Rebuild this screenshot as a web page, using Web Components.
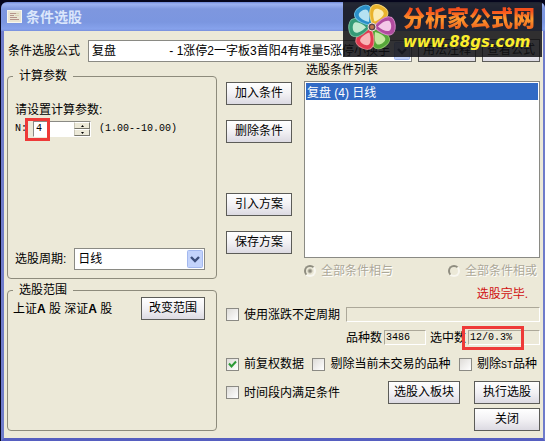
<!DOCTYPE html>
<html lang="zh-CN">
<head>
<meta charset="utf-8">
<title>条件选股</title>
<style>
html {
  background: #05051c;
}
body {
  margin: 0;
  font: 12px/14px "Liberation Sans", "Noto Sans CJK SC", sans-serif;
  color: #000;
}
</style>
</head>
<body>
<stock-picker></stock-picker>

<script>
// every element is a template string put in an open shadow root
class BaseElement extends HTMLElement {
  constructor() {
    super();
    const template = document.createElement('template');
    template.innerHTML = this.constructor.html;
    this.attachShadow({ mode: 'open' });
    this.shadowRoot.appendChild(template.content.cloneNode(true));
  }
}

class XpWindow extends BaseElement {
  static html = `
<style>
:host {
  display: flex;
  flex-direction: column;
  box-sizing: border-box;
  min-height: 100vh;
  padding: 2px 0 0 1px;
  position: relative;
}
header {
  display: flex;
  align-items: center;
  gap: 4px;
  height: 29px;
  padding-left: 6px;
  border-radius: 6px 6px 0 0;
  background: linear-gradient(#6d86d4, #9db2f0 2px, #7e97df 7px, #7b96e0 20px, #86a2ec 27px, #7a90dc);
}
svg {
  width: 15px;
  height: 13px;
}
h1 {
  margin: 0;
  font-size: 14px;
  line-height: 16px;
  color: #dbe6fb;
}
main {
  flex: 1;
  padding: 8px 3px 6px;
  background: #ece9d8;
  border: solid #6f7ccb;
  border-width: 0 2px 3px 3px;
  border-bottom-color: #565fc0;
}
</style>
<header>
  <svg viewBox="0 0 15 13">
    <rect x=".5" y=".5" width="14" height="12" fill="#e9e4d2" stroke="#f7f6ee"/>
    <path d="M3 3.5h6M3 5.5h4M3 7.5h7M3 9.5h9" stroke="#b5938a"/>
    <path d="M9 3.5h3M8 5.5h4" stroke="#d8d4b4"/>
  </svg>
  <h1><slot name="title"></slot></h1>
</header>
<main><slot></slot></main>
<slot name="overlay"></slot>
`;
}

class XpButton extends BaseElement {
  static html = `
<style>
:host {
  display: block;
}
button {
  display: block;
  width: 100%;
  height: 23px;
  padding: 0 0 2px;
  font: inherit;
  color: #000;
  white-space: nowrap;
  border: 1px solid #5c5c58;
  border-radius: 0;
  background: linear-gradient(#fff, #f2f1f4 50%, #dcdae2);
}
</style>
<button type="button"><slot></slot></button>
`;
}

class XpGroup extends BaseElement {
  static html = `
<style>
:host {
  display: block;
}
fieldset {
  box-sizing: border-box;
  height: 100%;
  min-width: 0;
  margin: 0;
  padding: 0 11px 7px 5px;
  border: 1px solid #8d8b7c;
  border-radius: 4px;
}
legend {
  margin-left: 0;
  padding: 0 6px;
}
</style>
<fieldset>
  <legend><slot name="legend"></slot></legend>
  <slot></slot>
</fieldset>
`;
}

class XpCombo extends BaseElement {
  static html = `
<style>
:host {
  display: flex;
  align-items: center;
  gap: 8px;
}
label {
  white-space: nowrap;
}
.box {
  flex: 1;
  display: grid;
  min-width: 0;
}
select, svg {
  grid-area: 1 / 1;
}
select {
  appearance: none;
  width: 100%;
  height: 22px;
  padding: 0 20px 0 3px;
  font: inherit;
  color: #000;
  background: #fff;
  border: 1px solid #8a8a84;
  border-radius: 0;
}
svg {
  justify-self: end;
  align-self: center;
  width: 16px;
  height: 18px;
  margin-right: 2px;
  pointer-events: none;
}
</style>
<label for="choice"></label>
<div class="box">
  <select id="choice"><option></option></select>
  <svg viewBox="0 0 16 18">
    <rect x=".5" y=".5" width="15" height="17" rx="1" fill="#c3d3fb" stroke="#a3b8ee"/>
    <path d="M4 7l4 4 4-4" fill="none" stroke="#3d4f7c" stroke-width="2.4"/>
  </svg>
</div>
`;
  connectedCallback() {
    this.shadowRoot.querySelector('label').textContent = this.getAttribute('label');
    this.shadowRoot.querySelector('option').textContent = this.getAttribute('value');
  }
}

class XpSpin extends BaseElement {
  static html = `
<style>
:host {
  display: flex;
  align-items: center;
  font: 10px/14px "Liberation Mono", monospace;
}
label {
  width: 18px;
}
.box {
  position: relative;
  display: flex;
  align-items: center;
  width: 58px;
  height: 16px;
  box-sizing: border-box;
  border: 1px solid #8a8a84;
  border-color: #8a8a84 #fff #fff #8a8a84;
}
input {
  appearance: textfield;
  flex: 1;
  box-sizing: border-box;
  min-width: 0;
  height: 14px;
  padding: 0 2px;
  font: inherit;
  border: 0;
  background: #fff;
}
input::-webkit-inner-spin-button {
  appearance: none;
}
.arrows {
  display: grid;
  width: 16px;
}
.arrows button {
  display: grid;
  place-items: center;
  height: 7px;
  padding: 0;
  border: 1px solid;
  border-color: #fff #77766c #77766c #c8c5b6;
  background: #ece9d8;
}
svg {
  width: 3px;
  height: 2px;
}
.range {
  margin-left: 8px;
}
</style>
<label for="value"></label>
<div class="box">
  <input id="value" type="number">
  <div class="arrows">
    <button type="button" aria-label="增加"><svg viewBox="0 0 3 2"><path d="M0 2L1.500 0 3 2z"/></svg></button>
    <button type="button" aria-label="减少"><svg viewBox="0 0 3 2"><path d="M0 0L1.500 2 3 0z"/></svg></button>
  </div>
  <slot name="mark"></slot>
</div>
<span class="range"><slot></slot></span>
`;
  connectedCallback() {
    this.shadowRoot.querySelector('label').textContent = this.getAttribute('label');
    this.shadowRoot.querySelector('input').value = this.getAttribute('value');
  }
}

class XpCheck extends BaseElement {
  static html = `
<style>
:host {
  display: block;
}
label {
  display: flex;
  align-items: center;
  gap: 5px;
  height: 14px;
  white-space: nowrap;
}
.box {
  display: grid;
}
input, svg {
  grid-area: 1 / 1;
  width: 13px;
  height: 13px;
  margin: 0;
}
input {
  appearance: none;
  border: 1px solid #8b8a84;
  box-sizing: border-box;
  background: linear-gradient(135deg, #dedcd8, #fff);
}
svg {
  display: none;
  pointer-events: none;
}
input:checked + svg {
  display: block;
}
</style>
<label>
  <span class="box">
    <input type="checkbox">
    <svg viewBox="0 0 13 13"><path d="M3 5.500l2.500 3 4.500-5" fill="none" stroke="#2c9a35" stroke-width="2"/></svg>
  </span>
  <span><slot></slot></span>
</label>
`;
  connectedCallback() {
    this.shadowRoot.querySelector('input').checked = this.hasAttribute('checked');
  }
}

class XpRadio extends BaseElement {
  static html = `
<style>
:host {
  display: block;
}
label {
  display: flex;
  align-items: center;
  gap: 5px;
  color: #aca899;
  text-shadow: 1px 1px #fff;
  white-space: nowrap;
}
input {
  appearance: none;
  box-sizing: border-box;
  width: 12px;
  height: 12px;
  margin: 0;
  border: 2px solid;
  border-color: #8f8d80 #f8f7f0 #f8f7f0 #8f8d80;
  border-radius: 50%;
}
input:checked {
  background: radial-gradient(circle, #8f8d80 1px, transparent 3px);
}
</style>
<label><input type="radio" name="logic" disabled><span><slot></slot></span></label>
`;
  connectedCallback() {
    this.shadowRoot.querySelector('input').checked = this.hasAttribute('checked');
  }
}

class XpField extends BaseElement {
  static html = `
<style>
:host {
  display: flex;
  align-items: center;
  gap: 2px;
}
label {
  white-space: nowrap;
}
label:empty {
  display: none;
}
.box {
  position: relative;
  flex: 1;
  display: flex;
}
input {
  box-sizing: border-box;
  width: 100%;
  min-width: 0;
  height: 15px;
  padding: 0 1px;
  font: 10px/13px "Liberation Mono", monospace;
  color: #000;
  background: #ece9d8;
  border: 1px solid;
  border-color: #aca899 #fff #fff #aca899;
}
</style>
<label for="value"></label>
<div class="box"><input id="value" readonly><slot name="mark"></slot></div>
`;
  connectedCallback() {
    const input = this.shadowRoot.querySelector('input');
    this.shadowRoot.querySelector('label').textContent = this.getAttribute('label') || '';
    input.value = this.getAttribute('value') || '';
    if (!this.getAttribute('label')) {
      input.setAttribute('aria-label', this.getAttribute('hint') || '');
    }
  }
}

class XpList extends BaseElement {
  static html = `
<style>
:host {
  display: flex;
  flex-direction: column;
  gap: 4px;
}
label {
  line-height: 13px;
  padding-left: 2px;
}
select {
  flex: 1;
  box-sizing: border-box;
  width: 100%;
  min-height: 177px;
  padding: 1px;
  font: inherit;
  background: #fff;
  border: 1px solid #8a8a84;
  border-radius: 0;
  outline: 0;
  overflow: hidden;
}
option {
  min-height: 16px;
  padding: 0 1px;
}
option:checked {
  color: #fff;
  background: #316ac5 linear-gradient(#316ac5, #316ac5);
}
</style>
<label for="list"><slot></slot></label>
<select id="list" size="10"><option selected></option></select>
`;
  connectedCallback() {
    this.shadowRoot.querySelector('option').textContent = this.getAttribute('value');
  }
}

// red frame laid over a value
class RedMark extends BaseElement {
  static html = `
<style>
:host {
  position: absolute;
  inset: -4px auto -5px var(--mark-left, -6px);
  width: var(--mark-width, 62px);
  box-sizing: border-box;
  border: 3px solid #ee3a38;
  pointer-events: none;
}
</style>
`;
}

class SiteBadge extends BaseElement {
  static html = `
<style>
:host {
  position: absolute;
  top: 2px;
  right: 3px;
  display: flex;
  align-items: center;
  box-sizing: border-box;
  width: 199px;
  height: 55px;
  background: rgba(16, 16, 20, .86);
}
svg {
  width: 56px;
  height: 55px;
  flex: none;
}
.text {
  display: grid;
  gap: 1px;
  padding: 0 0 2px 4px;
}
.name {
  font-size: 22px;
  font-weight: 900;
  line-height: 26px;
  color: transparent;
  background: linear-gradient(#f5501c 20%, #ff9a2e 50%, #f06a20 80%);
  background-clip: text;
  -webkit-background-clip: text;
}
a {
  font: italic bold 15px/18px "DejaVu Sans", sans-serif;
  color: #fbee2c;
  text-decoration: none;
}
</style>
<svg viewBox="0 0 56 55">
  <defs>
    <path id="petal" d="M0-2C-5-6-10-13-9-18C-8-25 8-25 9-18C10-13 5-6 0-2z"/>
    <path id="shine" d="M0-6C-3-9-6-14-5-17C-4-20 4-20 5-17C6-14 3-9 0-6z"/>
  </defs>
  <g transform="translate(29 25)">
    <g transform="rotate(148)"><use href="#petal" fill="#56a83a" stroke="#8fc76a"/><use href="#shine" fill="#c5e8a0"/></g>
    <g transform="rotate(206)"><use href="#petal" fill="#e23a50" stroke="#f08a92"/><use href="#shine" fill="#f9b5b8"/></g>
    <g transform="rotate(268)"><use href="#petal" fill="#369b77" stroke="#7cc4a2"/><use href="#shine" fill="#c3ead0"/></g>
    <g transform="rotate(-32)"><use href="#petal" fill="#2b8fc8" stroke="#6fbfdf"/><use href="#shine" fill="#b5e2f2"/></g>
    <g transform="rotate(25)"><use href="#petal" fill="#e9b32c" stroke="#f3d272"/><use href="#shine" fill="#fbecb4"/></g>
    <g transform="rotate(86)"><use href="#petal" fill="#b04b9f" stroke="#d58cc6"/><use href="#shine" fill="#f4c8e8"/></g>
    <circle r="4" fill="#5c474c" stroke="#e9ddd5"/>
    <circle r="2" fill="#c2734c"/>
  </g>
</svg>
<div class="text">
  <span class="name">分析家公式网</span>
  <a href="#">www.88gs.com</a>
</div>
`;
}

class StockPicker extends BaseElement {
  static html = `
<style>
:host {
  display: block;
}
.row {
  display: flex;
  align-items: center;
}
.formula {
  gap: 6px;
  padding-left: 1px;
}
.formula xp-combo {
  flex: 1;
}
.formula xp-button {
  width: 58px;
}
.columns {
  display: grid;
  grid-template-columns: 210px 1fr;
  gap: 9px;
  margin-top: 2px;
}
.left {
  display: grid;
  grid-template-rows: auto 1fr;
  gap: 4px;
  padding-top: 5px;
}
.params {
  display: grid;
  gap: 4px;
  padding: 20px 0 1px 2px;
}
.params xp-combo {
  margin-top: 107px;
}
.scope {
  justify-content: space-between;
}
.scope xp-button {
  width: 64px;
}
.top {
  display: grid;
  grid-template-columns: 66px 1fr;
  gap: 6px 12px;
}
.actions {
  display: flex;
  flex-direction: column;
  gap: 15px;
  padding-top: 18px;
}
.actions xp-button:nth-child(3) {
  margin-top: 35px;
}
.radios {
  grid-column: 2;
  justify-content: space-between;
  padding-right: 3px;
}
.status {
  margin: 9px 12px 6px 0;
  text-align: right;
  color: #d01010;
}
.period {
  gap: 6px;
}
.period xp-field {
  flex: 1;
}
.counts {
  display: grid;
  grid-template-columns: 80px 110px;
  justify-content: end;
  gap: 4px;
  margin-top: 8px;
}
.checks {
  justify-content: space-between;
  margin: 12px 3px 10px 0;
}
.half {
  font: 10px/10px "Liberation Mono", monospace;
}
.run {
  display: grid;
  grid-template-columns: 1fr 72px 66px;
  align-items: center;
  gap: 4px 14px;
}
.run xp-button:last-child {
  grid-column: 3;
}
</style>
<xp-window>
  <span slot="title">条件选股</span>
  <div class="row formula">
    <xp-combo label="条件选股公式" value="复盘&nbsp;&nbsp;&nbsp;&nbsp;&nbsp;&nbsp;&nbsp;&nbsp;&nbsp;&nbsp;&nbsp;&nbsp;&nbsp;&nbsp;&nbsp;&nbsp;- 1涨停2一字板3首阳4有堆量5涨停小换手"></xp-combo>
    <xp-button>用法注释</xp-button>
    <xp-button>查看公式</xp-button>
  </div>
  <div class="columns">
    <div class="left">
      <xp-group>
        <span slot="legend">计算参数</span>
        <div class="params">
          <div>请设置计算参数:</div>
          <xp-spin label="N:" value="4">
            <red-mark slot="mark" style="--mark-width: 25px; --mark-left: -9px"></red-mark>(1.00--10.00)
          </xp-spin>
          <xp-combo label="选股周期:" value="日线"></xp-combo>
        </div>
      </xp-group>
      <xp-group>
        <span slot="legend">选股范围</span>
        <div class="row scope">
          <span>上证<b>A</b> 股 深证<b>A</b> 股</span>
          <xp-button>改变范围</xp-button>
        </div>
      </xp-group>
    </div>
    <div class="right">
      <div class="top">
        <div class="actions">
          <xp-button>加入条件</xp-button>
          <xp-button>删除条件</xp-button>
          <xp-button>引入方案</xp-button>
          <xp-button>保存方案</xp-button>
        </div>
        <xp-list value="复盘 (4) 日线">选股条件列表</xp-list>
        <div class="row radios">
          <xp-radio checked>全部条件相与</xp-radio>
          <xp-radio>全部条件相或</xp-radio>
        </div>
      </div>
      <div class="status">选股完毕.</div>
      <div class="row period">
        <xp-check>使用涨跌不定周期</xp-check>
        <xp-field hint="周期"></xp-field>
      </div>
      <div class="counts">
        <xp-field label="品种数" value="3486"></xp-field>
        <xp-field label="选中数" value="12/0.3%"><red-mark slot="mark"></red-mark></xp-field>
      </div>
      <div class="row checks">
        <xp-check checked>前复权数据</xp-check>
        <xp-check>剔除当前未交易的品种</xp-check>
        <xp-check>剔除<span class="half">ST</span>品种</xp-check>
      </div>
      <div class="run">
        <xp-check>时间段内满足条件</xp-check>
        <xp-button>选股入板块</xp-button>
        <xp-button>执行选股</xp-button>
        <xp-button>关闭</xp-button>
      </div>
    </div>
  </div>
  <site-badge slot="overlay"></site-badge>
</xp-window>
`;
}

customElements.define('xp-window', XpWindow);
customElements.define('xp-button', XpButton);
customElements.define('xp-group', XpGroup);
customElements.define('xp-combo', XpCombo);
customElements.define('xp-spin', XpSpin);
customElements.define('xp-check', XpCheck);
customElements.define('xp-radio', XpRadio);
customElements.define('xp-field', XpField);
customElements.define('xp-list', XpList);
customElements.define('red-mark', RedMark);
customElements.define('site-badge', SiteBadge);
customElements.define('stock-picker', StockPicker);
</script>
</body>
</html>
